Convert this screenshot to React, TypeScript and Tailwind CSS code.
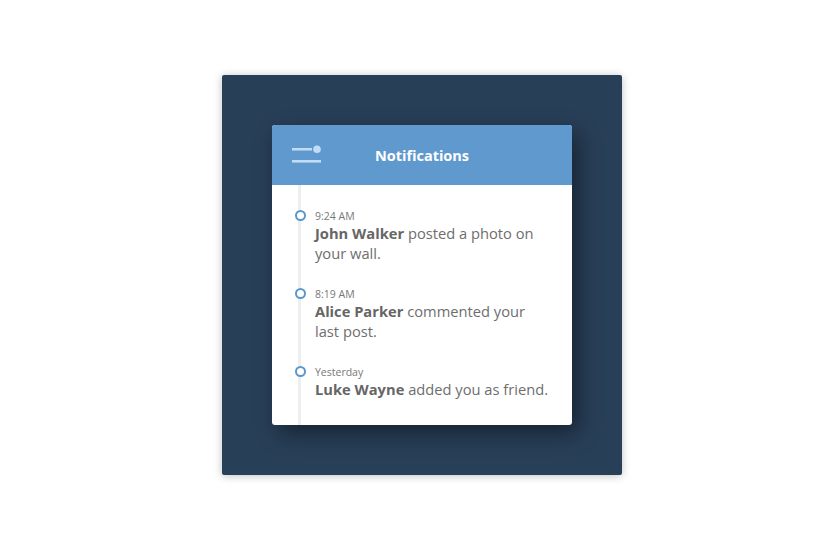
import React from "react";

const items = [
  { time: "9:24 AM", name: "John Walker", text: "posted a photo on your wall." },
  { time: "8:19 AM", name: "Alice Parker", text: "commented your last post." },
  { time: "Yesterday", name: "Luke Wayne", text: "added you as friend." },
];

export default function App() {
  return (
    <div className="w-[823px] h-[539px] bg-white pt-[75px] pl-[222px]" style={{ fontFamily: '"Open Sans", "Noto Sans", sans-serif' }}>
      <div className="w-[400px] h-[400px] bg-[#283f58] rounded-[2px] shadow-[0_1px_8px_rgba(0,0,0,0.25)] pt-[50px] pl-[50px]">
        <div className="w-[300px] h-[300px] bg-white rounded-[3px] overflow-hidden shadow-[6px_8px_22px_rgba(0,0,0,0.45)] flex flex-col">
          <div className="h-[60px] bg-[#5f99cd] flex items-center relative shrink-0">
            <svg className="absolute left-[20px] top-[20px]" width="32" height="20" viewBox="0 0 32 20">
              <rect x="0" y="3" width="20" height="2.5" fill="#c2dcf5" />
              <circle cx="25" cy="4.2" r="3.8" fill="#c2dcf5" />
              <rect x="0" y="15" width="29" height="2.6" fill="#c2dcf5" />
            </svg>
            <div className="w-full text-center text-white font-bold text-[14.5px] pt-[2px]">Notifications</div>
          </div>
          <div className="flex-1 ml-[26px] border-l-[3px] border-[#eeeeee] pt-[24px] flex flex-col gap-[24px]">
            {items.map((it) => (
              <div key={it.time} className="relative pl-[14px] pr-[20px]">
                <div className="absolute left-[-7px] top-[1px] w-[11px] h-[11px] rounded-full border-2 border-[#5a97cc] bg-white" style={{ transform: "translateX(1px)" }} />
                <div className="text-[10.5px] leading-[14px] text-[#777777]">{it.time}</div>
                <div className="text-[14.7px] leading-[20px] text-[#6e6e6e]">
                  <span className="font-bold text-[#666666]">{it.name}</span> {it.text}
                </div>
              </div>
            ))}
          </div>
        </div>
      </div>
    </div>
  );
}
